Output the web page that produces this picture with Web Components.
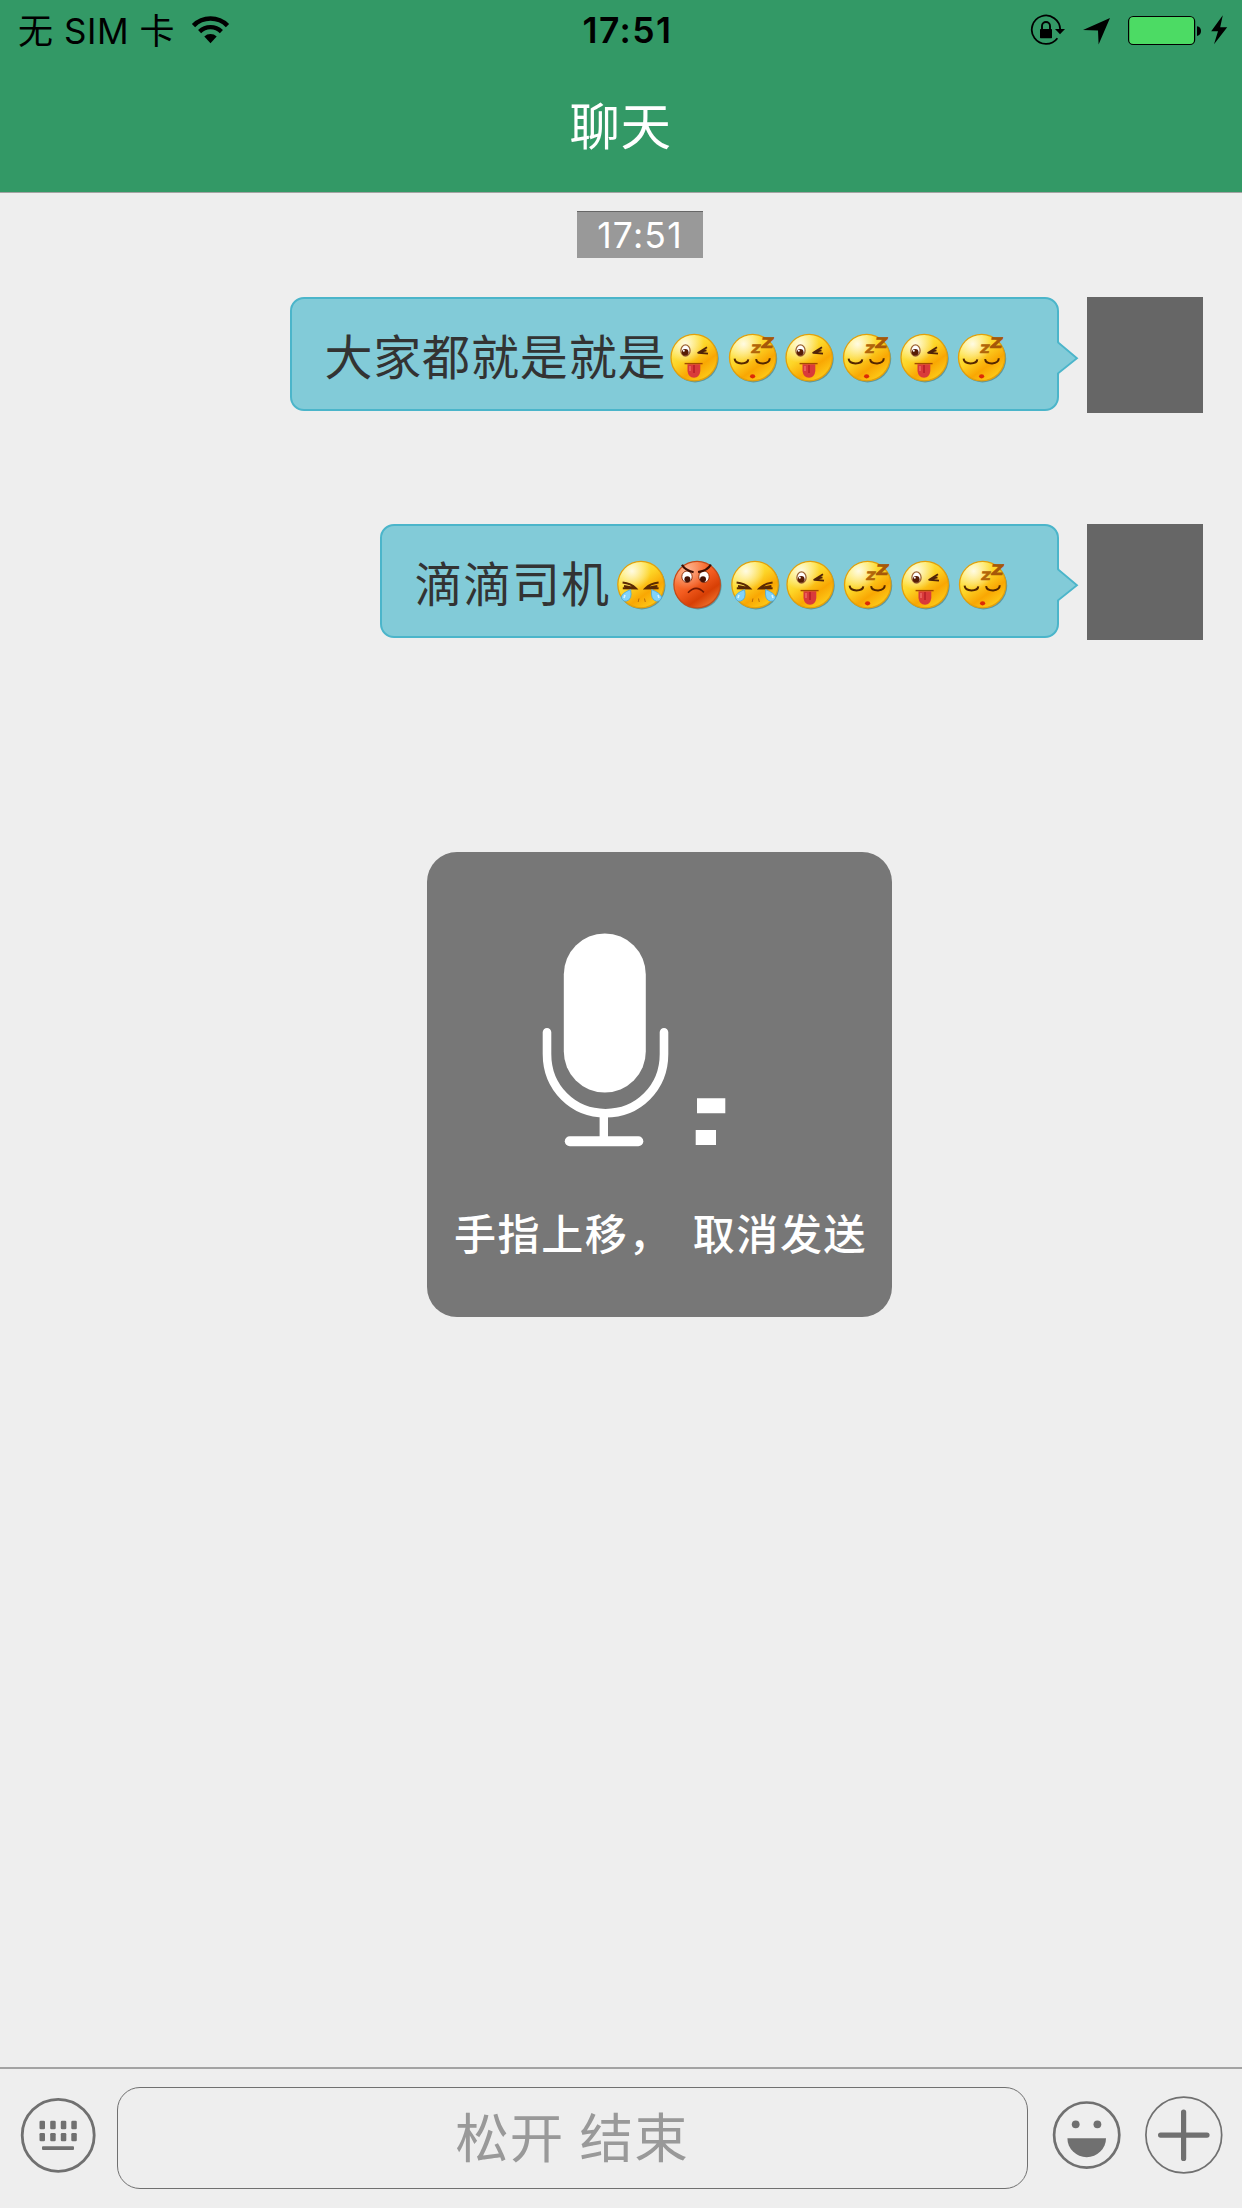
<!DOCTYPE html>
<html lang="zh-CN">
<head>
<meta charset="utf-8">
<title>聊天</title>
<style>
html,body{margin:0;padding:0}
body{width:1242px;height:2208px;overflow:hidden;background:#eee;font-family:Inter,"Noto Sans CJK SC",sans-serif}
</style>
</head>
<body>
<chat-app></chat-app>
<script>
const ICONS = {
  wifi: ['191 14 40 32', `<g fill="none" stroke="#000"><path d="M193.5 25.6A24 24 0 0 1 227.5 25.6" stroke-width="4.6"/><path d="M199.6 31.6A15.6 15.6 0 0 1 221.4 31.6" stroke-width="4.4"/></g><path d="M204.3 36.6A9 9 0 0 1 216.7 36.6L210.5 43.2Z"/>`],
  lock: ['1030 14 36 32', `<path d="M1057.4 38.2A14.2 14.2 0 1 1 1060.2 29.5" fill="none" stroke="#000" stroke-width="1.8"/><path d="M1055 29H1065L1060 34.3Z"/><rect x="1040" y="29" width="12" height="9.2" rx=".6"/><path d="M1042 29V26a4 4 0 0 1 8 0V29" fill="none" stroke="#000" stroke-width="1.9"/>`],
  location: ['1082 16 30 30', `<path d="M1083 30.1L1110 18L1098.6 44.6L1098 30.6Z"/>`],
  battery: ['1127 14 76 33', `<rect x="1128.6" y="16.5" width="66" height="28" rx="4.6" fill="#4cdb64" stroke="#000" stroke-width="1.2"/><path d="M1197 26.2Q1201 27 1201 31T1197 35.9Z"/>`],
  bolt: ['1209 13 20 33', `<path d="M1222.8 15.2L1211.2 31.2H1218L1214 44.3L1227.2 27.2H1220.2Z"/>`],
  keyboard: ['20 2097 77 77', `<circle cx="58.2" cy="2135.3" r="36" fill="none" stroke="#707070" stroke-width="2.8"/><g fill="#707070">${[39.5,50.2,60.8,71.3].map(x=>`<rect x="${x}" y="2120.8" width="5.5" height="8.4" rx="1.3"/><rect x="${x}" y="2133" width="5.5" height="8.2" rx="1.3"/>`).join('')}<rect x="42" y="2146.2" width="32" height="3.9" rx="1"/></g>`],
  smile: ['1051 2099 71 72', `<circle cx="1086.7" cy="2135.1" r="32.6" fill="none" stroke="#707070" stroke-width="2.7"/><g fill="#707070"><circle cx="1075.7" cy="2124.3" r="3.9"/><circle cx="1097.4" cy="2124.3" r="3.9"/><path d="M1067.4 2138.2H1106A19.3 19 0 0 1 1067.4 2138.2Z"/></g>`],
  plus: ['1144 2095 80 80', `<circle cx="1183.8" cy="2135" r="37.9" fill="none" stroke="#707070" stroke-width="1.7"/><path d="M1160.6 2135.1H1207M1183.6 2112V2158.4" stroke="#707070" stroke-width="5.2" stroke-linecap="round"/>`],
  mic: ['537 927 194 226', `<rect x="563.8" y="933.5" width="82" height="159" rx="41" fill="#fff"/><path d="M547 1032.3V1054C547 1088 573 1113.2 605.5 1113.2S664 1088 664 1054V1032.3" fill="none" stroke="#fff" stroke-width="8.6" stroke-linecap="round"/><path d="M603.8 1114V1140" stroke="#fff" stroke-width="8.4"/><path d="M569.8 1141.2H638.3" stroke="#fff" stroke-width="10" stroke-linecap="round"/><path d="M697 1098.3H725.3V1113.3H697ZM695.7 1130H716V1145H695.7Z" fill="#fff"/>`]
};
customElements.define('ui-icon', class extends HTMLElement {
  constructor(){ super(); this.attachShadow({mode:'open'}); }
  connectedCallback(){
    const [box, art] = ICONS[this.getAttribute('name')];
    const [, , w, h] = box.split(' ');
    this.shadowRoot.innerHTML = `<style>:host{display:block;flex:none;width:${w}px;height:${h}px}svg{display:block}</style><svg width="${w}" height="${h}" viewBox="${box}">${art}</svg>`;
  }
});

const FACES = {
  tongue: `<ellipse cx="19.5" cy="21.5" rx="4.6" ry="5.6" fill="#fff" stroke="#9c6230" stroke-width="1.3"/><circle cx="19.2" cy="23.3" r="3.4" fill="#571d05"/><circle cx="17.8" cy="21.8" r="1" fill="#fff"/><path d="M41 18.2L32.2 23.7L42 24.6M34 23L40.5 21.4" fill="none" stroke="#512408" stroke-width="1.9" stroke-linejoin="round"/><path d="M18.6 34.6H36.6" stroke="#a34a00" stroke-width="1.4"/><path d="M21.5 35.2H34.3V42Q33.6 48.5 28 48.8Q22.3 48.5 21.5 42Z" fill="#d93a3a"/><path d="M28 36V44" stroke="#b81e28" stroke-width="1.6"/><path d="M24 37V42" stroke="#ed6763" stroke-width="1.6"/>`,
  sleep: `<path d="M10.6 29.7Q11 34.4 17.5 34.4Q24 34.4 24.3 30.4M32.1 30.1Q32.6 34.5 39.2 34.4Q45.6 34 45.8 29.3" fill="none" stroke="#532600" stroke-width="2"/><ellipse cx="28.6" cy="47.3" rx="2.6" ry="2.1" fill="#dc2a06"/><g font-family="Inter,sans-serif" font-weight="800" stroke-width=".7"><text font-size="11.5" fill="#b26509" stroke="#b26509" transform="translate(26.4 24.4) scale(1.22 1) skewX(-8)">Z</text><text font-size="14.5" fill="#a55809" stroke="#a55809" transform="translate(36.3 19.4) scale(1.28 1) skewX(-8)">Z</text></g>`,
  cry: `<path d="M9.6 26.6Q18 27.4 23 32.5L9.8 32.2M11 30L20 31.7M45.6 26.6Q37.4 27.4 32.3 32.5L45.6 32.2M44.4 30L35 31.7" fill="none" stroke="#5b2a02" stroke-width="2"/><path d="M17.6 33.6Q9 37 8.3 41Q9 45.3 13.2 45.2Q19.7 43.8 17.6 33.6ZM38.7 33.6Q37.2 43.8 43.4 45.2Q48 45.3 48.6 41Q47.2 37 38.7 33.6Z" fill="#82d3fa" stroke="#49a8da" stroke-width=".8"/><path d="M12 39L11 42M45 39L46 42" stroke="#d7f4ff" stroke-width="1.6"/><path d="M26 42.5L25.2 46M31.5 42.5L32.3 46" stroke="#b96b08" stroke-width="1"/>`,
  angry: `<ellipse cx="17.6" cy="20.8" rx="5.2" ry="5.8" fill="#fff" stroke="#8a2b08" stroke-width=".9"/><ellipse cx="34.6" cy="20.8" rx="5.2" ry="5.8" fill="#fff" stroke="#8a2b08" stroke-width=".9"/><circle cx="18" cy="23.2" r="3" fill="#441205"/><circle cx="33.6" cy="23.2" r="3" fill="#441205"/><path d="M12.6 8.8Q15.5 14.3 24.2 16.2M41.4 8.4Q38.5 14.3 28.7 16.2" fill="none" stroke="#3c0e02" stroke-width="2.2"/><path d="M18.6 36.8Q26.7 28.2 34.5 36.4" fill="none" stroke="#731902" stroke-width="1.6"/>`
};
customElements.define('chat-emoji', class extends HTMLElement {
  constructor(){ super(); this.attachShadow({mode:'open'}); }
  connectedCallback(){
    const k = this.getAttribute('face'), red = k === 'angry';
    const cx = {tongue:28.2, sleep:28.7, cry:28, angry:27.7}[k];
    const dx = {tongue:0, sleep:0, cry:3, angry:2.4}[k];
    this.shadowRoot.innerHTML = `<style>:host{display:block;flex:none;width:57.35px;height:57px}svg{display:block;overflow:visible}</style>
<svg width="57.35" height="57" viewBox="${-dx} 0 57.35 57"><defs>
<linearGradient id="b" x1=".15" y1=".08" x2=".8" y2="1">${red?'<stop offset="0" stop-color="#ff8749"/><stop offset=".45" stop-color="#f35c1f"/><stop offset=".72" stop-color="#d73f05"/><stop offset="1" stop-color="#f37a32"/>':'<stop offset="0" stop-color="#fff05b"/><stop offset=".4" stop-color="#fdd426"/><stop offset=".68" stop-color="#f9a703"/><stop offset="1" stop-color="#ffd31d"/>'}</linearGradient>
<radialGradient id="h" cx=".3" cy=".2" r=".42"><stop offset="0" stop-color="#fff" stop-opacity="${red?.45:.85}"/><stop offset="1" stop-color="#fff" stop-opacity="0"/></radialGradient></defs>
<circle cx="${cx+.9}" cy="29.8" r="23.6" fill="#2d5960" opacity=".45"/>
<circle cx="${cx}" cy="28.6" r="23.2" fill="url(#b)" stroke="${red?'#c44b19':'#e3a00b'}" stroke-width="1.3"/>
<circle cx="${cx}" cy="28.6" r="22.6" fill="url(#h)"/>${FACES[k]}</svg>`;
  }
});

customElements.define('status-bar', class extends HTMLElement {
  constructor(){
    super();
    this.attachShadow({mode:'open'}).innerHTML = `<style>
:host{display:grid;grid-template-columns:1fr auto 1fr;height:60px;color:#000;line-height:62px;white-space:pre}
.l,.r{display:flex;align-items:flex-start}
.l{padding-left:18px}
.carrier{width:173px;letter-spacing:.55px;font-size:35px;font-weight:400}
.time{font-weight:600;font-size:35.5px;letter-spacing:1.4px;padding-left:13px}
.r{justify-content:flex-end;padding-right:13px}
ui-icon{margin-top:14px}
.loc{margin:16px 15px 0 16px}.bolt{margin:13px 0 0 6px}
</style><div class="l"><span class="carrier">无 SIM 卡</span><ui-icon name="wifi"></ui-icon></div><span class="time">17:51</span><div class="r"><ui-icon name="lock"></ui-icon><ui-icon class="loc" name="location"></ui-icon><ui-icon name="battery"></ui-icon><ui-icon class="bolt" name="bolt"></ui-icon></div>`;
  }
});
customElements.define('nav-header', class extends HTMLElement {
  constructor(){
    super();
    this.attachShadow({mode:'open'}).innerHTML = `<style>
:host{display:block;height:192px;background:#396;border-bottom:1px solid #a3a3a3}
h1{margin:0;font:400 50.5px/126px "Noto Sans CJK SC",sans-serif;letter-spacing:.6px;color:#fff;text-align:center;padding-right:1px}
</style><status-bar></status-bar><h1><slot></slot></h1>`;
  }
});
customElements.define('time-stamp', class extends HTMLElement {
  constructor(){
    super();
    this.attachShadow({mode:'open'}).innerHTML = `<style>
:host{display:block;box-sizing:border-box;width:126px;height:47px;margin:18px 0 0 577px;border-top:1px solid #666;background:#999;color:#fff;font-size:35.5px;line-height:48px;text-align:center;letter-spacing:1.2px}
</style><slot></slot>`;
  }
});
customElements.define('chat-message', class extends HTMLElement {
  constructor(){ super(); this.attachShadow({mode:'open'}); }
  connectedCallback(){
    const faces = this.getAttribute('faces').split(' ').map(f=>`<chat-emoji face="${f}"></chat-emoji>`).join('');
    const w = +this.getAttribute('width');
    this.shadowRoot.innerHTML = `<style>
:host{display:flex;justify-content:flex-end;padding-right:39px;height:116px}
.bubble{box-sizing:border-box;position:relative;width:${w}px;height:114px;display:flex;padding:0 40px 0 32.4px;border:2px solid #4bb5ca;border-radius:14px;background:#82cbd8}
.text{font:400 48px/110px "Noto Sans CJK SC",sans-serif;letter-spacing:.85px;color:#333;white-space:pre}
.faces{display:flex;padding-top:29.8px}
.tip{position:absolute;right:-21.5px;top:42px}
.avatar{width:116px;height:116px;margin-left:28px;background:#666}
</style><div class="bubble"><span class="text"><slot></slot></span><div class="faces">${faces}</div><svg class="tip" width="22" height="34"><path d="M0 1.5H1.8L20 17.3L1.8 32H0Z" fill="#82cbd8"/><path d="M1.2 0V1.5L20 17.3L1.2 32.2V34" fill="none" stroke="#4bb5ca" stroke-width="1.8"/></svg></div><div class="avatar"></div>`;
  }
});
customElements.define('voice-hint', class extends HTMLElement {
  constructor(){
    super();
    this.attachShadow({mode:'open'}).innerHTML = `<style>
:host{position:absolute;left:427px;top:852px;width:465px;height:465px;border-radius:30px;background:#777;box-sizing:border-box;padding:75px 0 0 27px}
ui-icon{margin-left:83px}
p{margin:47px 0 0;font:500 42px/64px "Noto Sans CJK SC",sans-serif;letter-spacing:1.6px;word-spacing:9.7px;color:#fff;white-space:nowrap}
</style><ui-icon name="mic"></ui-icon><p><slot></slot></p>`;
  }
});
customElements.define('input-bar', class extends HTMLElement {
  constructor(){
    super();
    this.attachShadow({mode:'open'}).innerHTML = `<style>
:host{display:flex;box-sizing:border-box;height:141px;border-top:2px solid #a3a3a3;padding-left:20px;background:#eee}
.talk{box-sizing:border-box;width:911px;height:102px;margin:18px 0 0 19.5px;border:1.4px solid #707070;border-radius:23px;text-align:center;color:#999;font:400 53.5px/94px "Noto Sans CJK SC",sans-serif;letter-spacing:1.1px;word-spacing:2px}
.k{margin-top:28px}.s{margin:30px 22px 0 23.5px}.p{margin-top:26px}
</style><ui-icon class="k" name="keyboard"></ui-icon><div class="talk"><slot></slot></div><ui-icon class="s" name="smile"></ui-icon><ui-icon class="p" name="plus"></ui-icon>`;
  }
});
customElements.define('chat-app', class extends HTMLElement {
  constructor(){
    super();
    this.attachShadow({mode:'open'}).innerHTML = `<style>
:host{display:flex;flex-direction:column;position:relative;width:1242px;height:2208px;background:#eee}
main{flex:1}
.first{margin-top:39px}.second{margin-top:111px}
</style><nav-header>聊天</nav-header>
<main><time-stamp>17:51</time-stamp>
<chat-message class="first" width="769" faces="tongue sleep tongue sleep tongue sleep">大家都就是就是</chat-message>
<chat-message class="second" width="679" faces="cry angry cry tongue sleep tongue sleep">滴滴司机</chat-message></main>
<input-bar>松开 结束</input-bar>
<voice-hint>手指上移， 取消发送</voice-hint>`;
  }
});
</script>
</body>
</html>
